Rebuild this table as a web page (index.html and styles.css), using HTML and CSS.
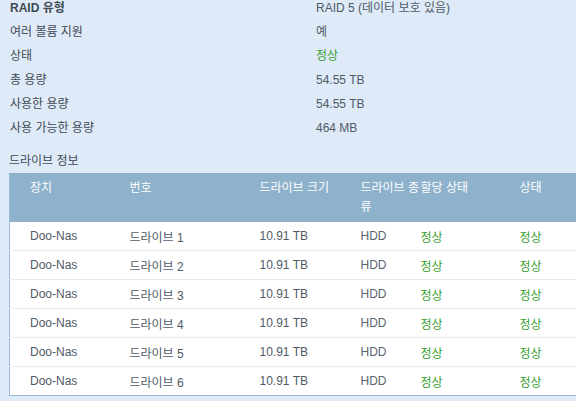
FILE: index.html
```html
<!DOCTYPE html>
<html lang="ko">
<head>
  <meta charset="UTF-8">
  <meta name="viewport" content="width=device-width, initial-scale=1.0">
  <title>스토리지 풀</title>
  <link rel="stylesheet" href="styles.css">
</head>
<body>
  <dl class="info">
    <dt class="strong">RAID 유형</dt>
    <dd>RAID 5 (데이터 보호 있음)</dd>
    <dt>여러 볼륨 지원</dt>
    <dd>예</dd>
    <dt>상태</dt>
    <dd class="ok">정상</dd>
    <dt>총 용량</dt>
    <dd>54.55 TB</dd>
    <dt>사용한 용량</dt>
    <dd>54.55 TB</dd>
    <dt>사용 가능한 용량</dt>
    <dd>464 MB</dd>
  </dl>

  <div class="section-title">드라이브 정보</div>
  <table class="drives">
    <colgroup>
      <col class="c-dev">
      <col class="c-num">
      <col class="c-size">
      <col class="c-type">
      <col class="c-alloc">
      <col class="c-state">
    </colgroup>
    <thead>
      <tr>
        <th>장치</th>
        <th>번호</th>
        <th>드라이브 크기</th>
        <th>드라이브 종류</th>
        <th class="tight">할당 상태</th>
        <th>상태</th>
      </tr>
    </thead>
    <tbody>
      <tr><td>Doo-Nas</td><td>드라이브 1</td><td>10.91 TB</td><td class="muted">HDD</td><td class="ok tight">정상</td><td class="ok">정상</td></tr>
      <tr><td>Doo-Nas</td><td>드라이브 2</td><td>10.91 TB</td><td class="muted">HDD</td><td class="ok tight">정상</td><td class="ok">정상</td></tr>
      <tr><td>Doo-Nas</td><td>드라이브 3</td><td>10.91 TB</td><td class="muted">HDD</td><td class="ok tight">정상</td><td class="ok">정상</td></tr>
      <tr><td>Doo-Nas</td><td>드라이브 4</td><td>10.91 TB</td><td class="muted">HDD</td><td class="ok tight">정상</td><td class="ok">정상</td></tr>
      <tr><td>Doo-Nas</td><td>드라이브 5</td><td>10.91 TB</td><td class="muted">HDD</td><td class="ok tight">정상</td><td class="ok">정상</td></tr>
      <tr><td>Doo-Nas</td><td>드라이브 6</td><td>10.91 TB</td><td class="muted">HDD</td><td class="ok tight">정상</td><td class="ok">정상</td></tr>
    </tbody>
  </table>
</body>
</html>
```

FILE: styles.css
```css
html, body {
  overflow: hidden;
}
body {
  margin: 0;
  background: #dfeaf8;
  font-family: "Liberation Sans", "Noto Sans CJK KR", sans-serif;
  font-size: 12px;
  color: #4a5560;
}

.info {
  display: grid;
  grid-template-columns: 306px 1fr;
  margin: -4px 0 0;
  padding-left: 10px;
  line-height: 24px;
}
.info dt {
  color: #3f4a55;
}
.info dd {
  margin: 0;
  color: #505b66;
}
.strong {
  font-weight: bold;
}
.info dd.ok {
  color: #36a02f;
}

.section-title {
  margin: 11px 0 2px 9px;
  line-height: 20px;
  color: #3f4a55;
}

.drives {
  margin-left: 9px;
  width: 570px;
  table-layout: fixed;
  border-collapse: collapse;
  border: 1px solid #9cbad7;
  border-top: none;
  background: #fff;
}
.c-dev { width: 100px; }
.c-num { width: 130px; }
.c-size { width: 101px; }
.c-type { width: 80px; }
.c-alloc { width: 79px; }

.drives th {
  background: #8eb1cc;
  color: #fff;
  font-weight: normal;
  text-align: left;
  vertical-align: top;
  padding: 6px 0 5px 20px;
  line-height: 19px;
  height: 38px;
}
.drives td {
  height: 28px;
  padding: 0 0 0 20px;
  border-bottom: 1px solid #e6ebf1;
  color: #505a66;
  white-space: nowrap;
}
.drives .tight {
  padding-left: 0;
}
.drives td.ok {
  color: #36a02f;
}
.drives td.muted {
  color: #5b6570;
}
.drives tbody tr:last-child td {
  border-bottom: none;
}
```
